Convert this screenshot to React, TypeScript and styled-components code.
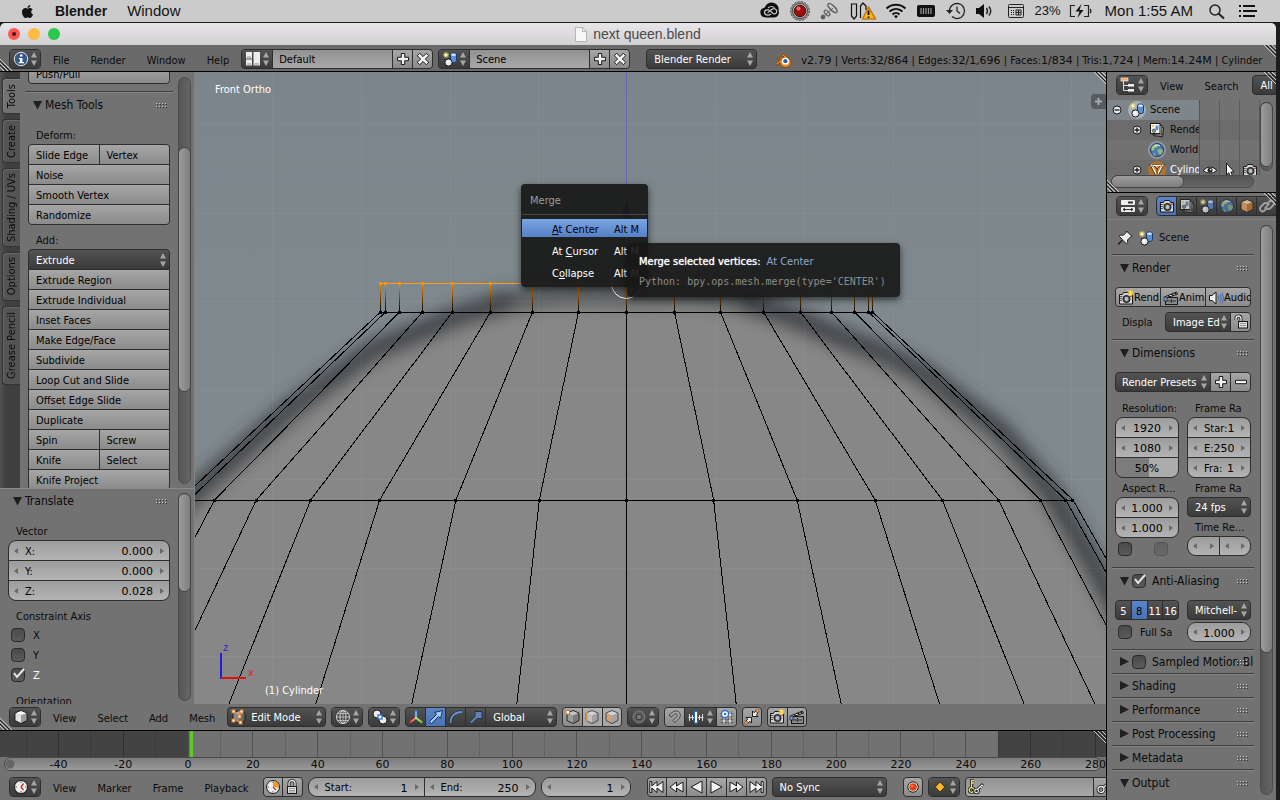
import React from "react";
import styled, { createGlobalStyle, css } from "styled-components";
import { FaApple } from "react-icons/fa";

const SANS = `"DejaVu Sans Condensed", "DejaVu Sans", sans-serif`;
const FIGURES = `"DejaVu Sans", sans-serif`;
const SYSTEM = `"Liberation Sans", sans-serif`;

const GlobalStyle = createGlobalStyle`
  * { box-sizing: border-box; }
  body {
    margin: 0;
    background: #1d1d1d;
    color: #0a0a0a;
    font: 11px/14px ${SANS};
    overflow: hidden;
  }
  button, input, select { font: inherit; color: inherit; margin: 0; }
  svg { display: block; flex: none; }
`;

const LINE = "#2e2e2e";
const WIDGET = "linear-gradient(#a6a6a6, #8b8b8b)";
const FIELD = "linear-gradient(#9c9c9c, #b4b4b4)";
const DARK = "linear-gradient(#535353, #3a3a3a)";
const BLUE = "linear-gradient(#5b84c6, #4872b5)";

/* ---------- icons ---------- */

const INK = "#1a1a1a";

const sceneArt = (
  <>
    <circle cx="4" cy="4" r="3" fill="#d8cf5a" opacity=".5" />
    <circle cx="4" cy="4" r="1.7" fill="#fff9b0" />
    <rect x="8.500" y="2" width="6" height="9.500" rx="2" fill="#5b8fd6" stroke="#1d3c6e" />
    <ellipse cx="11.500" cy="3.800" rx="2.500" ry="1.300" fill="#cfe2fb" />
    <circle cx="6.500" cy="11.500" r="3.600" fill="#e8e8e8" stroke={INK} />
    <circle cx="5.600" cy="10.600" r="1.300" fill="#fff" />
  </>
);

const cameraArt = (
  <>
    <path d="M1.500 4.500h3l1-2h5l1 2h3v9.500h-13z" fill="#d5d5d5" stroke={INK} />
    <path d="M2 6.500h2.500M2 8.500h2M2 10.500h2" stroke="#555" />
    <circle cx="8.500" cy="9" r="3.600" fill="#555" stroke={INK} />
    <circle cx="8.500" cy="9" r="1.900" fill="#b9c4d2" />
    <rect x="12" y="5.500" width="2" height="1.500" fill="#d84b2a" />
  </>
);

const sparkArt = <path d="M12.500 0v6M9.500 3h6M10.500 1l4 4M14.500 1l-4 4" stroke="#ffd94a" strokeWidth="1.200" />;

const clapperArt = (
  <>
    <rect x="2.500" y="7.500" width="12" height="7" fill="#8a8a8a" stroke={INK} />
    <path d="M4 11h9M8.500 9v4" stroke="#333" />
    <path d="M2 6.800L13.500 2l.9 2.200L3 8z" fill="#f2f2f2" stroke={INK} />
    <path d="M5 5.700l2 1.200M8.500 4.200l2 1.200M11.500 3l1.700 1" stroke={INK} strokeWidth="1.500" />
    <rect x="1" y="7" width="3" height="4" fill="#7aa4dd" stroke={INK} strokeWidth=".7" />
  </>
);

const worldArt = (
  <>
    <circle cx="8" cy="8" r="6.500" fill="#4b78ad" stroke="#20334d" />
    <path d="M4 3.500c2-1.500 4-1.500 5-.5L8 5.500 5.500 6 5 8.500 2.500 8.500C2 6.500 2.600 4.800 4 3.500z" fill="#a3c38f" />
    <path d="M8 8l3-1.500 3 1.500c0 2-1 4-3 5L9.500 11z" fill="#8fb37e" />
    <path d="M4 11l2 1 .5 2C5 13.500 4.300 12.500 4 11z" fill="#a3c38f" />
    <path d="M6 3.500q3-1.500 5 .5" stroke="#e7f1fa" fill="none" />
  </>
);

const layersArt = (
  <>
    <path d="M5.500 4.500l9 1.200-.8 9-9-1z" fill="#cfcfc4" stroke={INK} />
    <path d="M3.500 3l9.500.5-.3 9.500-9-.3z" fill="#e3e3da" stroke={INK} />
    <rect x="1.500" y="1.500" width="9.500" height="10" fill="#f4f4ee" stroke={INK} />
    <circle cx="4" cy="4" r="1" fill="#d6c83d" />
    <rect x="6.500" y="3.500" width="3" height="4.500" rx="1" fill="#5b8fd6" />
    <circle cx="5" cy="8.700" r="1.700" fill="#999" stroke={INK} strokeWidth=".6" />
  </>
);

const cubeFaces = (top: string, left: string, right: string) => (
  <>
    <path d="M8 1.500l6 2.500-6 2.500-6-2.500z" fill={top} />
    <path d="M2 4l6 2.500v8L2 11.500z" fill={left} />
    <path d="M14 4L8 6.500v8l6-3z" fill={right} />
    <path d="M8 1.500l6 2.500v7.500l-6 3-6-3V4z" fill="none" stroke={INK} strokeWidth=".9" />
  </>
);

const clockArt = (
  <>
    <circle cx="8" cy="8" r="6.500" fill="#eee" stroke={INK} />
    <path d="M8 2.500v1.500M8 12v1.500M2.500 8H4M12 8h1.500" stroke="#666" />
  </>
);

const art: Record<string, React.ReactNode> = {
  info: (
    <>
      <circle cx="8" cy="8" r="6.700" fill="#36578c" stroke="#dfe6ef" strokeWidth="1" />
      <rect x="7" y="3.500" width="2.400" height="2" fill="#fff" />
      <path d="M6 7h3.400v4H11v1.300H5.500V11H7V8.200H6z" fill="#fff" />
    </>
  ),
  layout: (
    <>
      <rect x="1" y="1" width="6" height="6.500" fill="#ececec" />
      <rect x="1" y="8.500" width="6" height="6" fill="#ececec" />
      <rect x="8.500" y="1" width="6.500" height="13.500" fill="#ececec" />
      <path d="M2 6h4M2 13h4M9.500 13h4.500" stroke="#8a8a8a" />
    </>
  ),
  scene: sceneArt,
  plus: <path d="M6.300 2.500h3.400v3.800h3.800v3.400H9.700v3.800H6.300V9.700H2.500V6.300h3.800z" fill="#f0f0f0" stroke={INK} />,
  minus: <path d="M2.500 6.300h11v3.400h-11z" fill="#f0f0f0" stroke={INK} />,
  cross: (
    <path d="M4.700 2.300L8 5.600l3.300-3.300 2.400 2.400L10.400 8l3.300 3.300-2.400 2.400L8 10.400l-3.300 3.300-2.400-2.400L5.600 8 2.300 4.700z" fill="#f0f0f0" stroke={INK} />
  ),
  blender: (
    <>
      <path d="M.500 12L6 7.500H2.300V5.800h6.200L6.300 4 7.700 2.500l6 5a5.300 4.700 0 1 1-9 3.500l-3 2.400z" fill="#f0851d" stroke="#5b3512" strokeWidth=".6" />
      <circle cx="9.800" cy="9.600" r="3.300" fill="#fff" />
      <circle cx="9.800" cy="9.600" r="2" fill="#2a5fa5" />
    </>
  ),
  cube: cubeFaces("#fff", "#e4e4e4", "#9c9c9c"),
  cubeOrange: cubeFaces("#ffd9a8", "#e8a765", "#c07a35"),
  editMode: (
    <>
      {cubeFaces("#aaa", "#8a8a8a", "#666")}
      {[[1, 1], [9, 1], [1, 10], [8, 12], [7, 6]].map(([x, y]) => (
        <rect key={`${x}-${y}`} x={x} y={y} width="3" height="3" fill="#fff" stroke="#e0781c" />
      ))}
    </>
  ),
  wire: (
    <g fill="none" stroke="#d6d6d6">
      <circle cx="8" cy="8" r="6.500" />
      <ellipse cx="8" cy="8" rx="3" ry="6.500" />
      <path d="M8 1.500v13M1.500 8h13M2.500 4.500h11M2.500 11.500h11" strokeWidth=".7" />
    </g>
  ),
  pivot: (
    <>
      <circle cx="5" cy="5" r="4" fill="#eee" stroke={INK} />
      <circle cx="11" cy="11" r="4" fill="#eee" stroke={INK} />
      <rect x="6" y="6" width="4" height="4" fill="#fff" stroke="#2d6fd0" strokeWidth="1.300" />
    </>
  ),
  axes: (
    <g strokeWidth="2.400" strokeLinecap="round">
      <path d="M8 9V2" stroke="#3f86e8" />
      <path d="M8 9l-5.500 4" stroke="#d83b2d" />
      <path d="M8 9l5.500 4" stroke="#6cbf32" />
      <path d="M8 9V3M8 9l-4 3M8 9l4 3" stroke="#fff" strokeWidth=".6" />
    </g>
  ),
  translate: <path d="M1.500 12.500L8.500 5.500 6.500 3.500 14.500 1.500 12.500 9.500 10.500 7.500 3.500 14.500z" fill="#9ecbf7" stroke="#16325c" />,
  rotate: (
    <>
      <path d="M2.500 14C2.500 7 7 3 14 3" fill="none" stroke="#22344d" strokeWidth="3.600" />
      <path d="M2.500 14C2.500 7 7 3 14 3" fill="none" stroke="#6d94c8" strokeWidth="1.800" />
    </>
  ),
  scale: <path d="M1.500 13l5.500-5.500V2.500h7v7H9L3.500 15z" fill="#5f84b4" stroke="#20334d" />,
  vertexMode: (
    <>
      {cubeFaces("#c4c4c4", "#9c9c9c", "#7a7a7a")}
      <rect x="1" y="1.500" width="3.500" height="3.500" fill="#fff" stroke="#e0781c" />
    </>
  ),
  edgeMode: (
    <g opacity=".75">
      {cubeFaces("#e0e0e0", "#cacaca", "#a0a0a0")}
      <path d="M2.500 3v9.500" stroke="#e38a35" strokeWidth="2" />
    </g>
  ),
  faceMode: <g opacity=".75">{cubeFaces("#e0e0e0", "#e89a5c", "#a0a0a0")}</g>,
  proportional: (
    <>
      <circle cx="8" cy="8" r="6" fill="#606060" stroke="#7c7c7c" />
      <circle cx="8" cy="8" r="2.800" fill="#7a7a7a" stroke="#333" />
    </>
  ),
  magnet: (
    <path d="M2 6l4.500-3.500c5-2.500 9 3 5.500 7L8 13.500l-2-2 4-4c1.200-1.700-.5-3.500-2.500-2.500L4 8z" fill="#a8a8a8" stroke="#444" />
  ),
  increment: (
    <>
      <path d="M.500 8.500h15M1.500 5v7M4.500 6v5M11.500 6v5M14.500 5v7" stroke="#e0e0e0" />
      <rect x="6.500" y="2.500" width="3" height="11.500" fill="#fff" stroke="#2d6fd0" />
    </>
  ),
  snapGrid: (
    <>
      <path d="M5 2v13M11 2v13M1 6h14M1 12h14" stroke={INK} strokeWidth="2.600" />
      <path d="M5 2v13M11 2v13M1 6h14M1 12h14" stroke="#fff" strokeWidth="1.200" />
      <circle cx="6" cy="5" r="3.500" fill="#fff" stroke="#2d6fd0" strokeWidth="1.300" />
      <circle cx="6" cy="5" r="1.300" fill="#2d6fd0" />
    </>
  ),
  snapPeel: (
    <>
      <path d="M8.500 2v5.500H14L12.300 5.800 14 4 12 2l-1.800 1.700zM7.500 14V8.500H2l1.700 1.700L2 12l2 2 1.800-1.700z" fill="#f0f0f0" stroke={INK} />
      <circle cx="13.500" cy="2" r="1.600" fill="#f3a35a" stroke="#8b4a12" strokeWidth=".7" />
      <circle cx="2.300" cy="13.700" r="1.600" fill="#f3a35a" stroke="#8b4a12" strokeWidth=".7" />
    </>
  ),
  camera: cameraArt,
  cameraNew: <>{cameraArt}{sparkArt}</>,
  clapper: clapperArt,
  clock: <>{clockArt}<path d="M8 8l2.500-3.500M8 8l2.500 3" stroke="#d02c1c" strokeWidth="1.300" /></>,
  clockAuto: <>{clockArt}<path d="M8 8V2a6 6 0 0 1 6 6z" fill="#f59a1d" /><path d="M8 8l3 3" stroke="#d02c1c" strokeWidth="1.300" /></>,
  lock: (
    <>
      <path d="M5 8V4.500a3 3 0 0 1 6 0V8" fill="none" stroke={INK} strokeWidth="3" />
      <path d="M5 8V4.500a3 3 0 0 1 6 0V8" fill="none" stroke="#eee" strokeWidth="1.300" />
      <rect x="3.500" y="7.500" width="9" height="7" fill="#ddd" stroke={INK} />
      <path d="M5 9.500h6M5 11.500h6M5 13h6" stroke="#888" strokeWidth=".8" />
    </>
  ),
  unlock: (
    <>
      <path d="M8 8V4.500a2.500 2.500 0 0 0-5 0V6" fill="none" stroke={INK} strokeWidth="3" />
      <path d="M8 8V4.500a2.500 2.500 0 0 0-5 0V6" fill="none" stroke="#eee" strokeWidth="1.300" />
      <rect x="5.500" y="7.500" width="9" height="6.500" fill="#ddd" stroke={INK} />
      <path d="M7 9.500h6M7 11.500h6" stroke="#888" strokeWidth=".8" />
    </>
  ),
  first: <path d="M.800 2.500h2V7L8 2.500V7l6-4.500v11L8 9v4.500L2.800 9v4.500h-2z" fill="#f3f3f3" stroke={INK} />,
  prev: <path d="M1 8l6.500-5v4L14 3v10L7.500 9v4z" fill="#f3f3f3" stroke={INK} />,
  playBack: <path d="M13 2v12L2 8z" fill="#f3f3f3" stroke={INK} />,
  play: <path d="M3 2v12l11-6z" fill="#f3f3f3" stroke={INK} />,
  next: <path d="M15 8L8.500 3v4L2 3v10l6.500-4v4z" fill="#f3f3f3" stroke={INK} />,
  last: <path d="M15.200 2.500h-2V7L8 2.500V7L2 2.500v11L8 9v4.500L13.200 9v4.500h2z" fill="#f3f3f3" stroke={INK} />,
  record: (
    <>
      <circle cx="8" cy="8" r="5.200" fill="#f0f0f0" stroke={INK} />
      <circle cx="8" cy="8" r="3.800" fill="#e03c10" />
      <circle cx="7" cy="7" r="1.500" fill="#ff7c4a" />
    </>
  ),
  diamond: <path d="M8 3l4.800 5L8 13 3.200 8z" fill="#fbb829" stroke="#4a3506" />,
  keySet: (
    <g fill="none">
      <path d="M3.500 8V1.500H6M3.500 4H6" stroke={INK} strokeWidth="3" />
      <circle cx="3.500" cy="11" r="2.300" stroke={INK} strokeWidth="3" />
      <path d="M3.500 8.500V1.500H6M3.500 4H6" stroke="#f1e36a" strokeWidth="1.300" />
      <circle cx="3.500" cy="11" r="2.300" stroke="#f1e36a" strokeWidth="1.300" />
      <path d="M9 11l5-5 1.500 1.500M12.500 7.500L14 9" stroke={INK} strokeWidth="3" />
      <circle cx="8.500" cy="12" r="1.800" stroke={INK} strokeWidth="3" />
      <path d="M9.500 10.500l4.500-4.500 1.500 1.500M12.500 7.500L14 9" stroke="#eee" strokeWidth="1.200" />
      <circle cx="8.500" cy="12" r="1.800" stroke="#eee" strokeWidth="1.200" />
    </g>
  ),
  key: (
    <g fill="none">
      <path d="M7 9l7-6" stroke={INK} strokeWidth="3" />
      <circle cx="5" cy="10.500" r="3" stroke={INK} strokeWidth="3" />
      <path d="M7 9l7-6" stroke="#eee" strokeWidth="1.300" />
      <circle cx="5" cy="10.500" r="3" stroke="#eee" strokeWidth="1.300" />
    </g>
  ),
  outliner: (
    <>
      <path d="M3.500 4v9.500H8M3.500 8.500H8" stroke="#ddd" fill="none" />
      <rect x="1" y="1" width="7" height="3" fill="#f2a65a" stroke="#fff" strokeWidth=".6" />
      <rect x="8" y="7" width="6" height="2.600" fill="#eee" />
      <rect x="8" y="12" width="6" height="2.600" fill="#eee" />
    </>
  ),
  properties: (
    <>
      <rect x="1" y="2" width="14" height="5" rx="1" fill="#eee" />
      <rect x="8" y="3.500" width="5" height="2" fill="#333" />
      <rect x="1" y="9" width="14" height="5" rx="1" fill="#eee" />
      <path d="M3 11.500h10M5 10l-2 1.500L5 13M11 10l2 1.500-2 1.500" stroke="#333" fill="none" />
    </>
  ),
  layers: layersArt,
  world: worldArt,
  mesh: (
    <>
      <path d="M2.500 3.500h11L8 13.500z" fill="#d98a3a" stroke={INK} strokeWidth="2.600" />
      <path d="M2.500 3.500h11L8 13.500z" fill="#d98a3a" stroke="#fff" strokeWidth="1.300" />
      <path d="M8 7l-3-3M8 7l3-3M8 7v5" stroke="#5b3512" />
      {[[2.5, 3.5], [13.5, 3.5], [8, 13.5]].map(([x, y]) => (
        <circle key={x} cx={x} cy={y} r="1.400" fill="#f6c795" stroke="#6b3d10" strokeWidth=".6" />
      ))}
    </>
  ),
  eye: (
    <>
      <path d="M1 8.500Q8 1.500 15 8.500 8 14 1 8.500z" fill="#eee" stroke={INK} />
      <circle cx="8" cy="8.300" r="2.500" fill="#222" />
      <circle cx="8.600" cy="7.600" r=".8" fill="#fff" />
    </>
  ),
  cursor: <path d="M4.500 1l7.500 9H8.800l2 4.300-2 1-2-4.500-2.300 2z" fill="#fff" stroke={INK} />,
  link: (
    <g fill="none" strokeLinecap="round">
      <path d="M6.500 11.500l-1 1a2.600 2.600 0 0 1-3.700-3.700l3-3a2.600 2.600 0 0 1 3.700 0M9.500 4.500l1-1a2.600 2.600 0 0 1 3.700 3.700l-3 3a2.600 2.600 0 0 1-3.700 0" stroke="#bbb" strokeWidth="2" />
      <path d="M6 10l4-4" stroke="#ccc" strokeWidth="1.500" />
    </g>
  ),
  pin: (
    <path d="M9.500 1l5.500 5.500-1.500.5-3 3 .3 2.800-1.300 1L6 10.300 1.500 14.500 1 14l4.500-4.500L2.300 6.300l1-1.300 3 .3 3-3z" fill="#eee" stroke={INK} />
  ),
  speaker: (
    <>
      <path d="M1.500 5.500H4L8 2v12l-4-3.500H1.500z" fill="#f0f0f0" stroke={INK} />
      <path d="M10 5.500q1.500 2.500 0 5M12 4q2.500 4 0 8M14 2.500q3 5.500 0 11" fill="none" stroke="#3f6fb8" />
    </>
  ),
};

const Icon = ({ name, size = 16 }: { name: string; size?: number }) => (
  <svg width={size} height={size} viewBox="0 0 16 16" fill="none" aria-hidden="true">
    {art[name]}
  </svg>
);

const Arrows = () => (
  <svg width="6" height="14" viewBox="0 0 6 14" aria-hidden="true">
    <path d="M3 0l3 5.500H0zM3 14l3-5.500H0z" fill="#a5a5a5" />
  </svg>
);

const Nudge = ({ right }: { right?: boolean }) => (
  <svg width="4" height="6" viewBox="0 0 4 6" aria-hidden="true">
    <path d={right ? "M0 0l4 3-4 3z" : "M4 0L0 3l4 3z"} fill="#6a6a6a" />
  </svg>
);

const Triangle = ({ open }: { open?: boolean }) => (
  <svg width="9" height="9" viewBox="0 0 9 9" aria-hidden="true">
    <path d={open ? "M0 0h9L4.500 8.500z" : "M0 0l9 4.500L0 9z"} fill="#1f1f1f" />
  </svg>
);

const Grip = () => (
  <svg width="12" height="6" viewBox="0 0 12 6" shapeRendering="crispEdges" aria-hidden="true">
    {[0, 3, 6, 9].map((x) => (
      <g key={x}>
        <path d={`M${x} 1h1M${x} 4h1`} stroke="#c8c8c8" />
        <path d={`M${x + 1} 2h1M${x + 1} 5h1`} stroke="#333" />
      </g>
    ))}
  </svg>
);

/* ---------- shell ---------- */

const Screen = styled.div`
  display: flex;
  flex-direction: column;
  height: 100vh;
  background: #000;
`;

const MacBar = styled.header`
  display: flex;
  align-items: center;
  height: 22px;
  padding: 0 22px 0 20px;
  background: #cbcbcb;
  color: #141414;
  font: 14px/20px ${SYSTEM};
`;

const MacMenu = styled.button<{ $bold?: boolean }>`
  border: 0;
  padding: 0;
  margin-left: 20px;
  background: none;
  font-size: ${(p) => (p.$bold ? 14 : 15)}px;
  font-weight: ${(p) => (p.$bold ? 700 : 400)};
`;

const MacTray = styled.div`
  display: flex;
  align-items: center;
  gap: 8px;
  margin-left: auto;
`;

const Charge = styled.span`
  font-size: 13px;
`;

const Clock = styled.time`
  padding: 0 5px 0 4px;
  font-size: 15px;
`;

const TitleBar = styled.div`
  display: flex;
  align-items: center;
  height: 22px;
  margin: 1px 4px 0 0;
  padding: 0 8px;
  background: linear-gradient(#e9e6e9, #d2d0d2);
  border-radius: 5px 5px 0 0;
  color: #4a4a4a;
  font: 14px/20px ${SYSTEM};
`;

const Lights = styled.div`
  display: flex;
  flex: 1;
  gap: 8px;
`;

const Light = styled.button<{ $color: string }>`
  display: grid;
  place-items: center;
  width: 12px;
  height: 12px;
  padding: 0;
  border: 0;
  border-radius: 50%;
  background: ${(p) => p.$color};
`;

const Title = styled.h1`
  display: flex;
  align-items: center;
  gap: 6px;
  margin: 0;
  font: inherit;
`;

const Spacer = styled.div`
  flex: 1;
`;

const Workspace = styled.div`
  display: flex;
  flex-direction: column;
  flex: 1;
  min-height: 0;
  margin-right: 4px;
  background: #000;
`;

const Desk = styled.div`
  display: flex;
  flex: 1;
  min-height: 0;
  background: #1d1d1d;
`;

const Column = styled.div`
  display: flex;
  flex-direction: column;
  flex: 1;
  min-width: 0;
  min-height: 0;
`;

const Bar = styled.div<{ $tone?: string; $line?: boolean; $top?: number }>`
  position: relative;
  display: flex;
  align-items: center;
  flex: none;
  height: ${(p) => (p.$line ? 27 : 26)}px;
  padding: ${(p) => p.$top ?? 0}px 0 0 9px;
  overflow: hidden;
  background: ${(p) => p.$tone ?? "#727272"};
  border-bottom: ${(p) => (p.$line ? "1px solid #000" : "0")};
  white-space: nowrap;
`;

const MenuRow = styled.nav`
  display: flex;
  gap: 1px;
  margin: 0 2px;
`;

const MenuItem = styled.button`
  border: 0;
  padding: 3px 10px 0;
  background: none;
  line-height: 18px;
`;

const Corner = styled.svg<{ $at: "tr" | "bl" }>`
  position: absolute;
  ${(p) => (p.$at === "tr" ? "top: 0; right: 0;" : "bottom: 0; left: 0;")}
  pointer-events: none;
`;

const CornerGrip = ({ at }: { at: "tr" | "bl" }) => (
  <Corner $at={at} width="12" height="12" viewBox="0 0 12 12" aria-hidden="true">
    <path d={at === "tr" ? "M0 0l12 12M4 0l8 8M8 0l4 4" : "M0 0l12 12M0 4l8 8M0 8l4 4"} stroke="#c9c9c9" />
    <path d={at === "tr" ? "M2 0l10 10M6 0l6 6" : "M0 2l10 10M0 6l6 6"} stroke="#222" />
  </Corner>
);

/* ---------- widgets ---------- */

const Group = styled.div<{ $w?: number; $gap?: number; $cols?: string; $rows?: number; $round?: number; $grow?: boolean; $bleed?: number }>`
  display: grid;
  grid-template-columns: ${(p) => p.$cols ?? "minmax(0, 1fr)"};
  grid-auto-rows: ${(p) => p.$rows ?? 18}px;
  gap: 1px;
  flex: none;
  ${(p) => p.$grow && css`flex: 1;`}
  width: ${(p) => (p.$w ? `${p.$w}px` : "auto")};
  margin-left: ${(p) => p.$gap ?? 0}px;
  margin-right: ${(p) => -(p.$bleed ?? 0)}px;
  overflow: hidden;
  border: 1px solid ${LINE};
  border-radius: ${(p) => p.$round ?? 4}px;
  background: ${LINE};
`;

const Split = styled.div`
  display: grid;
  grid-template-columns: 1fr 1fr;
  gap: 1px;
`;

type Tone = "light" | "dark" | "blue" | "dim" | "muted";
const tones: Record<Tone, string> = {
  light: WIDGET,
  dark: DARK,
  muted: DARK,
  blue: BLUE,
  dim: "linear-gradient(#b2b2b2, #a6a6a6)",
};

const Push = styled.button<{ $tone?: Tone; $text?: boolean; $tight?: boolean; $figure?: boolean }>`
  display: flex;
  align-items: center;
  justify-content: ${(p) => (p.$text || p.$tight ? "flex-start" : "center")};
  min-width: 0;
  border: 0;
  padding: ${(p) => (p.$text ? "2px 7px 0" : p.$tight ? "1px 0 0 2px" : p.$figure ? "3px 0 0" : "0")};
  overflow: hidden;
  background: ${(p) => tones[p.$tone ?? "light"]};
  color: ${(p) => (p.$tone === "dark" ? "#fff" : "#000")};
  white-space: nowrap;
  & > svg { opacity: ${(p) => (p.$tone === "muted" ? 0.75 : 1)}; }
`;

const TypeButton = styled.button`
  display: flex;
  align-items: center;
  justify-content: space-between;
  border: 0;
  padding: 0 3px;
  background: ${DARK};
`;

const Picker = styled.span`
  position: relative;
  display: flex;
  align-items: center;
  min-width: 0;
  background: ${DARK};
  color: #fff;
  & > svg { position: absolute; right: 3px; pointer-events: none; }
  & > svg:first-child { left: 3px; right: auto; }
`;

const PickerSelect = styled.select<{ $pad?: number }>`
  appearance: none;
  width: 100%;
  height: 100%;
  border: 0;
  padding: 2px 8px 0 ${(p) => p.$pad ?? 7}px;
  background: none;
  outline: 0;
  option { color: #000; }
`;

const Select = ({ label, value, pad, icon }: { label: string; value: string; pad?: number; icon?: string }) => (
  <Picker>
    {icon && <Icon name={icon} />}
    <PickerSelect aria-label={label} $pad={pad}>
      <option>{value}</option>
    </PickerSelect>
    <Arrows />
  </Picker>
);

const EditorType = ({ icon, label, gap }: { icon: string; label: string; gap?: number }) => (
  <Group $w={32} $gap={gap}>
    <TypeButton aria-label={label} aria-haspopup="menu">
      <Icon name={icon} />
      <Arrows />
    </TypeButton>
  </Group>
);

const NumberBox = styled.label<{ $fill?: boolean }>`
  display: flex;
  align-items: center;
  min-width: 0;
  padding: 0 5px;
  background: ${(p) => (p.$fill ? "linear-gradient(90deg, #7c7c7c 54%, #acacac 54%)" : FIELD)};
  color: #000;
  white-space: nowrap;
`;

const NumberName = styled.span`
  margin-left: 7px;
  padding-top: 2px;
`;

const NumberInput = styled.input<{ $align: "right" | "center" }>`
  flex: 1;
  width: 0;
  min-width: 0;
  height: 18px;
  border: 0;
  padding: 2px ${(p) => (p.$align === "right" ? 7 : 0)}px 0 0;
  background: none;
  outline: 0;
  font-family: ${FIGURES};
  text-align: ${(p) => p.$align};
`;

const Num = ({ name, value, align = "right", label, fill }: { name?: string; value: string; align?: "right" | "center"; label: string; fill?: boolean }) => (
  <NumberBox $fill={fill}>
    {!fill && <Nudge />}
    {name && <NumberName>{name}</NumberName>}
    <NumberInput aria-label={label} defaultValue={value} $align={align} />
    {!fill && <Nudge right />}
  </NumberBox>
);

const TextField = styled.input`
  min-width: 0;
  border: 0;
  padding: 2px 6px 0;
  background: linear-gradient(#929292, #a8a8a8);
  color: #000;
  outline: 0;
`;

const IconField = styled.label`
  display: flex;
  align-items: center;
  min-width: 0;
  padding-left: 2px;
  background: linear-gradient(#929292, #a8a8a8);
  input { flex: 1; background: none; }
`;

const Tick = styled.span<{ $faded?: boolean }>`
  position: relative;
  display: flex;
  flex: none;
  width: 14px;
  height: 14px;
  opacity: ${(p) => (p.$faded ? 0.4 : 1)};
  svg { position: absolute; left: 2px; top: 0; pointer-events: none; }
`;

const TickInput = styled.input`
  appearance: none;
  width: 14px;
  height: 14px;
  border: 1px solid #2b2b2b;
  border-radius: 4px;
  background: linear-gradient(#4a4a4a, #5a5a5a);
  &:not(:checked) + svg { display: none; }
`;

const CheckBox = ({ label, checked, faded }: { label?: string; checked?: boolean; faded?: boolean }) => (
  <Tick $faded={faded}>
    <TickInput type="checkbox" defaultChecked={checked} aria-label={label} />
    <svg width="13" height="11" viewBox="0 0 13 11" aria-hidden="true">
      <path d="M1 5l3 4 7-8" fill="none" stroke="#e6e6e6" strokeWidth="2" />
    </svg>
  </Tick>
);

const CheckRow = styled.label<{ $on?: boolean }>`
  display: flex;
  align-items: center;
  gap: 8px;
  height: 20px;
  padding-left: 3px;
  color: ${(p) => (p.$on ? "#fff" : "inherit")};
  line-height: 16px;
  white-space: nowrap;
`;

const CheckText = styled.span`
  padding-top: 2px;
`;

const Track = styled.div<{ $m?: string; $flat?: boolean }>`
  display: flex;
  flex-direction: ${(p) => (p.$flat ? "row" : "column")};
  ${(p) => (p.$flat ? "height: 13px;" : "width: 13px;")}
  flex: none;
  margin: ${(p) => p.$m ?? "5px 3px"};
  border: 1px solid #4c4c4c;
  border-radius: 7px;
  background: ${(p) => (p.$flat ? "linear-gradient(#555, #656565)" : "linear-gradient(90deg, #555, #656565)")};
`;

const Thumb = styled.div<{ $before?: number; $size: number; $flat?: boolean }>`
  flex: 0 0 ${(p) => p.$size}%;
  ${(p) => (p.$flat ? "" : `margin-top: ${p.$before ?? 0}px;`)}
  border-radius: 6px;
  background: ${(p) => (p.$flat ? "linear-gradient(#9c9c9c, #7e7e7e)" : "linear-gradient(90deg, #9c9c9c, #7e7e7e)")};
  box-shadow: 0 0 0 1px #444;
`;

const HeadBar = styled.div<{ $open?: boolean; $pad?: number }>`
  display: flex;
  align-items: center;
  flex: none;
  height: ${(p) => (p.$open ? 27 : 24)}px;
  border-top: 1px solid #3f3f3f;
  box-shadow: inset 0 1px 0 #858585;
  padding: 0 ${(p) => p.$pad ?? 5}px 0 8px;
  white-space: nowrap;
  & > svg:last-child { margin-left: auto; }
`;

const HeadText = styled.h2<{ $gap?: number }>`
  flex: 0 1 auto;
  min-width: 0;
  margin: 1px 0 0 ${(p) => p.$gap ?? 3}px;
  font: 12px/15px ${SANS};
`;

const Label = styled.div<{ $pad?: number }>`
  height: 19px;
  padding-left: ${(p) => p.$pad ?? 8}px;
  overflow: hidden;
  line-height: 21px;
  white-space: nowrap;
`;

/* ---------- 3D view left regions ---------- */

const ViewRow = styled.div`
  display: flex;
  flex: 1;
  min-height: 0;
`;

const Shelf = styled.aside`
  display: flex;
  flex-direction: column;
  flex: 0 0 195px;
  background: #727272;
  border-right: 1px solid #858585;
`;

const ShelfTop = styled.div`
  display: flex;
  flex: 1;
  min-height: 0;
  overflow: hidden;
`;

const Tabs = styled.div`
  display: flex;
  flex-direction: column;
  gap: 5px;
  flex: 0 0 20px;
  padding: 6px 0 0 2px;
  background: linear-gradient(90deg, #525252, #3f3f3f 30%);
`;

const Tab = styled.button<{ $h: number; $on?: boolean }>`
  height: ${(p) => p.$h}px;
  border: 1px solid #333;
  border-right: 0;
  border-radius: 4px 0 0 4px;
  padding: 0;
  background: ${(p) => (p.$on ? "#727272" : "#545454")};
  box-shadow: inset 1px 1px 0 rgba(255, 255, 255, 0.12);
  span {
    display: block;
    writing-mode: vertical-rl;
    transform: rotate(180deg);
    margin: 0 auto;
    line-height: 15px;
  }
`;

const ToolPanel = styled.div`
  display: flex;
  flex-direction: column;
  flex: 1;
  min-width: 0;
  padding: 0 5px;
`;

const Stack = styled.div<{ $m?: string }>`
  display: flex;
  flex-direction: column;
  flex: none;
  margin: ${(p) => p.$m ?? "0 3px"};
`;

const ShelfBottom = styled.div`
  display: flex;
  flex: 0 0 216px;
  overflow: hidden;
  border-top: 1px solid #8a8a8a;
`;

const OpPanel = styled.div`
  flex: 1;
  min-width: 0;
  padding: 0 8px;
`;

const OpHead = styled(HeadBar)`
  border: 0;
  box-shadow: none;
  height: 24px;
  padding: 0 2px 0 5px;
`;

const Gap = styled.div<{ $h: number }>`
  flex: none;
  height: ${(p) => p.$h}px;
`;

/* ---------- viewport ---------- */

const Viewport = styled.main`
  position: relative;
  flex: 1;
  min-width: 0;
  overflow: hidden;
  background: #7e878c;
  & > svg:first-child { width: 100%; height: 100%; }
`;

const Popup = styled.div`
  position: absolute;
  left: 326px;
  top: 112px;
  width: 127px;
  height: 103px;
  padding: 7px 1px 0;
  border-radius: 4px;
  background: rgba(24, 24, 24, 0.93);
  box-shadow: 0 3px 7px rgba(0, 0, 0, 0.6);
  color: #fff;
`;

const PopupTitle = styled.div`
  height: 24px;
  margin-bottom: 4px;
  padding-left: 8px;
  border-bottom: 1px solid #484848;
  color: #9c9c9c;
  line-height: 20px;
`;

const PopupItem = styled.button<{ $on?: boolean }>`
  display: flex;
  justify-content: space-between;
  align-items: center;
  width: 100%;
  height: 18px;
  margin-bottom: 4px;
  border: 0;
  padding: 3px 8px 0 30px;
  background: ${(p) => (p.$on ? "linear-gradient(#7ba4e2, #5580c4)" : "none")};
  color: ${(p) => (p.$on ? "#000" : "#fff")};
`;

const Tip = styled.div`
  position: absolute;
  left: 432px;
  top: 171px;
  width: 273px;
  height: 54px;
  padding: 9px 12px 0;
  border-radius: 4px;
  background: rgba(24, 24, 24, 0.92);
  box-shadow: 0 3px 7px rgba(0, 0, 0, 0.6);
  color: #fff;
  line-height: 20px;
  white-space: nowrap;
`;

const TipTitle = styled.span`
  margin-right: 6px;
  text-shadow: 0 0 1px #fff;
`;

const TipValue = styled.span`
  color: #93a7ca;
`;

const TipCode = styled.code`
  display: block;
  color: #8c8c8c;
  font: 10px/20px "DejaVu Sans Mono", monospace;
`;

const ViewLabel = styled.span<{ $bottom?: boolean }>`
  position: absolute;
  left: ${(p) => (p.$bottom ? 70 : 20)}px;
  ${(p) => (p.$bottom ? "bottom: 6px;" : "top: 11px;")}
  color: #fff;
`;

const Expand = styled.button`
  position: absolute;
  top: 22px;
  right: 0;
  width: 15px;
  height: 15px;
  display: grid;
  place-items: center;
  border: 0;
  border-radius: 4px 0 0 4px;
  padding: 0;
  background: #555b5f;
`;

const CX = 626.5;
const ring = [-246, -241, -227, -204, -174, -136, -94, -48, 0, 48, 94, 137, 174, 205, 228, 242, 246];
const levels = [
  { y: 312, k: 1 },
  { y: 500, k: 1.815 },
  { y: 704, k: 2.285 },
];

const Scene3D = () => (
  <svg viewBox="195 72 911 632" preserveAspectRatio="xMidYMid slice" aria-label="Mesh in front view">
    <defs>
      <filter id="soft" x="-20%" y="-20%" width="140%" height="140%">
        <feGaussianBlur stdDeviation="8" />
      </filter>
      <linearGradient id="sky" x1="0" y1="0" x2="0" y2="1">
        <stop offset="0" stopColor="#7c858b" />
        <stop offset=".5" stopColor="#808a8e" />
      </linearGradient>
      <linearGradient id="edge" x1="0" y1="283" x2="0" y2="312" gradientUnits="userSpaceOnUse">
        <stop offset="0" stopColor="#ff8c00" />
        <stop offset="1" stopColor="#000" />
      </linearGradient>
    </defs>
    <rect x="195" y="72" width="911" height="632" fill="url(#sky)" />
    <g filter="url(#soft)">
      <path d="M150 540L206 488L290 414L371 356L421 335L462 318L512 302L626 300L746 302L796 320L878 354L930 380L1000 438L1055 500L1106 595L1150 660V760H150z" fill="#878787" />
      <path d="M150 535L206 484L290 410L371 352L421 332L460 316L512 301" fill="none" stroke="#33373a" strokeWidth="22" opacity=".82" />
      <path d="M490 303L560 296L690 296L765 304" fill="none" stroke="#3a3e40" strokeWidth="19" opacity=".7" />
      <path d="M740 300L796 319L835 336L878 352L925 375L1000 432L1052 495L1090 560L1130 635" fill="none" stroke="#33373a" strokeWidth="23" opacity=".82" />
    </g>
    <g stroke="#fff" opacity=".04" shapeRendering="crispEdges">
      {[-4, -3, -2, -1, 1, 2, 3, 4, 5].map((i) => (
        <path key={i} d={`M${Math.round(627 + i * 88.7)} 72V704`} />
      ))}
      {[0, 1, 2, 3, 4, 5, 6].map((i) => (
        <path key={i} d={`M195 ${Math.round(124 + i * 88.7)}H1106`} />
      ))}
    </g>
    <path d="M626.500 72V200" stroke="#6468b4" />
    <path d="M626.500 200l4.500 17h-9z" fill="#2a2aa8" />
    <g shapeRendering="crispEdges" stroke="#000" fill="none">
      {ring.map((o, i) => (
        <polyline key={i} points={levels.map((l) => `${CX + o * l.k},${l.y}`).join(" ")} />
      ))}
      <path d="M380 312.500H873M195 500.500H1073" />
    </g>
    <g shapeRendering="crispEdges">
      {ring.map((o, i) => (
        <g key={i}>
          <rect x={Math.round(CX + o - 0.5)} y="284" width="1" height="28" fill="url(#edge)" />
          <rect x={Math.round(CX + o - 1.5)} y="282" width="3" height="3" fill="#ff8c00" />
          <rect x={Math.round(CX + o - 1.5)} y="311" width="3" height="3" fill="#000" />
          <rect x={Math.round(CX + o * 1.815 - 1.5)} y="499" width="3" height="3" fill="#000" />
        </g>
      ))}
      <path d="M380 283.500H873" stroke="#ff9a1a" />
    </g>
    <circle cx="626.500" cy="283.500" r="15" fill="none" stroke="#fff" />
    <g shapeRendering="crispEdges" strokeWidth="2">
      <path d="M221 653v26" stroke="#1f1fd6" />
      <path d="M221 678h25" stroke="#e01010" />
    </g>
    <text x="223" y="651" fill="#2b2bd0" fontSize="11">z</text>
    <text x="248" y="676" fill="#d02b2b" fontSize="11">x</text>
  </svg>
);

/* ---------- timeline ---------- */

const TimeBody = styled.div`
  position: relative;
  flex: none;
  height: 26px;
  & > svg:first-child { width: 100%; height: 100%; }
`;

const Ruler = styled.div`
  display: flex;
  flex: none;
  height: 17px;
  padding: 0 5px 3px 4px;
  background: #727272;
  overflow: hidden;
`;

const RulerBar = styled.div`
  flex: 1;
  min-width: 0;
  border: 1px solid #484848;
  border-radius: 7px;
  background: radial-gradient(circle at 5px 6px, #666 4px, transparent 5px), linear-gradient(#7c7c7c, #999);
`;

const Ticks = styled.div`
  display: grid;
  grid-template-columns: repeat(17, minmax(0, 1fr));
  margin: 0 -28px 0 21px;
  font-family: ${FIGURES};
  text-align: center;
  line-height: 13px;
`;

const FrameLines = () => {
  const at = (f: number) => 188 + f * 3.24;
  const lines = Array.from({ length: 34 }, (_, i) => -50 + i * 10);
  return (
    <svg viewBox="0 0 1106 26" preserveAspectRatio="none" shapeRendering="crispEdges" aria-hidden="true">
      <rect width="1106" height="26" fill="#434343" />
      <rect x={at(0)} width={250 * 3.24} height="26" fill="#727272" />
      {lines.map((f) => (
        <path key={f} d={`M${Math.floor(at(f)) + 0.5} 0V26`} stroke="#000" opacity={f % 20 === 0 ? 0.28 : 0.12} />
      ))}
      <rect x="190" width="3" height="26" fill="#5ec92f" />
    </svg>
  );
};

/* ---------- right side ---------- */

const SideColumn = styled.div`
  display: flex;
  flex-direction: column;
  flex: 0 0 169px;
  min-width: 0;
  min-height: 0;
  margin-left: 1px;
  overflow: hidden;
  background: #727272;
`;

const Tree = styled.div`
  position: relative;
  display: flex;
  flex-direction: column;
  flex: none;
  height: 95px;
  border-bottom: 1px solid #000;
  background: #727272;
`;

const TreeMain = styled.div`
  display: flex;
  height: 77px;
  overflow: hidden;
`;

const TreeList = styled.ul`
  flex: 1;
  margin: 2px 0 0;
  padding: 0;
  list-style: none;
`;

const TreeRow = styled.li<{ $alt?: boolean }>`
  display: flex;
  height: 20px;
  background: ${(p) => (p.$alt ? "#6c6c6c" : "#727272")};
`;

const TreeName = styled.div<{ $depth: number; $on?: boolean; $lit?: boolean }>`
  display: flex;
  align-items: center;
  flex: 0 0 93px;
  min-width: 0;
  border-right: 1px solid #555;
  padding-left: ${(p) => 5 + p.$depth * 20}px;
  overflow: hidden;
  background: ${(p) => (p.$on ? "#7c868b" : "none")};
  color: ${(p) => (p.$lit ? "#fff" : "inherit")};
  line-height: 16px;
  white-space: nowrap;
`;

const Expander = styled.span<{ $hidden?: boolean }>`
  flex: none;
  width: 12px;
  visibility: ${(p) => (p.$hidden ? "hidden" : "visible")};
`;

const Halo = styled.span<{ $color?: string }>`
  flex: none;
  margin: 0 4px 0 4px;
  padding: 1px;
  border-radius: 50%;
  background: ${(p) => p.$color ?? "none"};
`;

const TreeCell = styled.div`
  display: grid;
  place-items: center;
  flex: 0 0 20px;
  border-right: 1px solid #5c5c5c;
`;

const PlusMinus = ({ minus }: { minus?: boolean }) => (
  <svg width="10" height="10" viewBox="0 0 10 10" aria-hidden="true">
    <circle cx="5" cy="5" r="4" fill="#e8e8e8" stroke={INK} />
    <path d={minus ? "M2.500 5h5" : "M2.500 5h5M5 2.500v5"} stroke={INK} strokeWidth="1.300" />
  </svg>
);

const PropsBody = styled.div`
  display: flex;
  flex: 1;
  min-height: 0;
  overflow: hidden;
  border-top: 1px solid #808080;
`;

const PropsMain = styled.div`
  flex: 0 0 142px;
  width: 142px;
  min-width: 0;
  margin-left: 5px;
`;

const Crumb = styled.div`
  display: flex;
  align-items: center;
  gap: 5px;
  height: 34px;
  padding: 2px 0 0 5px;
`;

const Body = styled.div`
  display: flex;
  flex-direction: column;
  padding: 6px 3px 7px;
`;

const Line = styled.div<{ $gap?: number }>`
  display: flex;
  margin-bottom: ${(p) => p.$gap ?? 0}px;
`;

const Halves = styled.div`
  display: grid;
  grid-template-columns: 64px 64px;
  column-gap: 8px;
  align-items: start;
`;

const NameCell = styled.div<{ $w: number }>`
  width: ${(p) => p.$w}px;
  height: 20px;
  padding-left: 7px;
  line-height: 22px;
`;

const Checks = styled.div`
  display: flex;
  align-items: center;
  gap: 22px;
  height: 22px;
  padding-left: 3px;
`;

const PanelCheck = styled.span`
  margin-left: 3px;
`;

const Panel = ({ title, open, children, check }: { title: string; open?: boolean; children?: React.ReactNode; check?: React.ReactNode }) => (
  <section>
    <HeadBar $open={open}>
      <Triangle open={open} />
      {check && <PanelCheck>{check}</PanelCheck>}
      <HeadText $gap={check ? 6 : 3}>{title}</HeadText>
      <Grip />
    </HeadBar>
    {children && <Body>{children}</Body>}
  </section>
);

/* ---------- macOS tray ---------- */

const Tray = () => (
  <MacTray>
    <svg width="22" height="18" viewBox="0 0 22 18" fill="none" aria-hidden="true">
      <path d="M7 15.500a5.500 5 0 0 1-1.200-9.900A7 6.500 0 0 1 19.500 8.500a5 5 0 0 1-4.500 7z" fill="#0c0c0c" />
      <path d="M12 12c-2 2-6.500 1.500-6.500-1.500s4.500-3.500 6.500-1l2 2c1.500 1 3.800 0 3.800-2s-2.300-4-5.300-2c-1.500 1-3 3-4 3.500M9 6c2-2 5-2 6.500 0" stroke="#cbcbcb" strokeWidth="1.200" />
    </svg>
    <svg width="22" height="22" viewBox="0 0 22 22" aria-hidden="true">
      <circle cx="11" cy="11" r="9.500" fill="#8c8c8c" stroke="#555" strokeDasharray="2 1.500" />
      <circle cx="11" cy="11" r="7.500" fill="#ccc" stroke="#444" />
      <circle cx="11" cy="11" r="5.800" fill="#9a1010" stroke="#4a0505" />
      <circle cx="9.500" cy="8.500" r="2" fill="#e86a6a" />
    </svg>
    <svg width="22" height="18" viewBox="0 0 22 18" fill="none" stroke="#666" aria-hidden="true">
      <circle cx="4" cy="15" r="2" fill="#555" />
      <ellipse cx="8" cy="11" rx="3.500" ry="1.800" transform="rotate(45 8 11)" strokeWidth="1.300" />
      <ellipse cx="13.500" cy="6" rx="6" ry="2.300" transform="rotate(45 13.500 6)" strokeWidth="1.500" />
      <path d="M4 15l10-9" />
    </svg>
    <svg width="28" height="18" viewBox="0 0 28 18" aria-hidden="true">
      <path d="M2.500 2h5v12L5 17l-2.500-3zM11.500 16V4L14 1l3 3v4" fill="none" stroke="#111" strokeWidth="1.200" />
      <path d="M19.500 5l7 12h-13z" fill="#f8b81c" stroke="#c67a10" strokeLinejoin="round" strokeWidth="1.500" />
      <path d="M19.500 8.500v4.500M19.500 14.500v1.500" stroke="#111" strokeWidth="1.800" />
    </svg>
    <svg width="22" height="18" viewBox="0 0 22 18" fill="none" stroke="#111" strokeWidth="2" aria-hidden="true">
      <path d="M1.500 6.500c5.500-5 13.500-5 19 0M4.500 9.500c4-3.500 9-3.500 13 0M7.500 12.500c2-2 5-2 7 0" />
      <path d="M11 16.500l-2-2.500q2-1.500 4 0z" fill="#111" stroke="none" />
    </svg>
    <svg width="22" height="16" viewBox="0 0 22 16" aria-hidden="true">
      <rect x="2" y="2" width="18" height="12" rx="2" fill="#111" />
      <path d="M6 5v6M8.500 5v6M11 5v6M13.500 5v6M16 5v6" stroke="#999" strokeWidth="1.200" />
    </svg>
    <svg width="22" height="18" viewBox="0 0 22 18" fill="none" stroke="#222" strokeWidth="1.300" aria-hidden="true">
      <path d="M4.500 9a7.500 7.500 0 1 1 2.500 5.600M12 4.500V9l3 2.500" />
      <path d="M1 8h7L4.500 12z" fill="#222" stroke="none" />
    </svg>
    <svg width="22" height="16" viewBox="0 0 22 16" fill="none" aria-hidden="true">
      <path d="M1 5h3l5-4v14l-5-4H1z" fill="#111" />
      <path d="M11.500 5q2 3 0 6M14 3.500q3.500 4.500 0 9" stroke="#222" strokeWidth="1.400" />
    </svg>
    <svg width="22" height="16" viewBox="0 0 22 16" fill="none" stroke="#222" aria-hidden="true">
      <rect x="3.500" y="1.500" width="15" height="13" rx="1" />
      <path d="M3.500 4.500h15" />
      <path d="M6 7.500h4M6 9.500h4M6 11.500h4" strokeDasharray="1 1" />
      <path d="M11 7h5v5h-5zM13.500 7v5M11 9.500h5" />
    </svg>
    <Charge>23%</Charge>
    <svg width="24" height="16" viewBox="0 0 24 16" fill="none" stroke="#222" strokeWidth="1.200" aria-hidden="true">
      <path d="M6 2.500H1.500v11H6M15 2.500h4.500v11H15M21 6q2 2 0 4" />
      <path d="M12.500 1l-6 7.500h4L8.500 15l6-8h-4z" fill="#111" stroke="none" />
    </svg>
    <Clock>Mon 1:55 AM</Clock>
    <svg width="22" height="18" viewBox="0 0 22 18" fill="none" stroke="#222" strokeWidth="1.500" aria-hidden="true">
      <circle cx="9" cy="8" r="5" />
      <path d="M12.500 11.500L18 16.500" strokeWidth="2" />
    </svg>
    <svg width="22" height="16" viewBox="0 0 22 16" stroke="#111" strokeWidth="2" aria-hidden="true">
      <path d="M3 3h2M3 8h2M3 13h2M7 3h12M7 8h14M7 13h12" />
    </svg>
  </MacTray>
);

const Engine = styled.div`
  margin-left: 16px;
`;

const Logo = styled.span`
  margin: 0 9px 0 18px;
`;

const Stats = styled.output`
  padding-top: 3px;
`;

const Figure = styled.span`
  font-family: ${FIGURES};
`;

const stats = [
  ["v", "2.79"],
  ["Verts:", "32/864"],
  ["Edges:", "32/1,696"],
  ["Faces:", "1/834"],
  ["Tris:", "1,724"],
  ["Mem:", "14.24M"],
];

const tools = ["Extrude Region", "Extrude Individual", "Inset Faces", "Make Edge/Face", "Subdivide", "Loop Cut and Slide", "Offset Edge Slide", "Duplicate"];
const frames = Array.from({ length: 17 }, (_, i) => -40 + i * 20);
const playback = [
  ["first", "Jump to start"],
  ["prev", "Previous keyframe"],
  ["playBack", "Play backwards"],
  ["play", "Play"],
  ["next", "Next keyframe"],
  ["last", "Jump to end"],
];

export default function App() {
  return (
    <Screen>
      <GlobalStyle />
      <MacBar>
        <FaApple size={15} />
        <MacMenu $bold>Blender</MacMenu>
        <MacMenu>Window</MacMenu>
        <Tray />
      </MacBar>
      <Desk>
        <Column>
          <TitleBar>
            <Lights>
              <Light $color="#fc5753" aria-label="Close">
                <svg width="4" height="4" viewBox="0 0 4 4"><circle cx="2" cy="2" r="2" fill="#4a0404" /></svg>
              </Light>
              <Light $color="#fdbc40" aria-label="Minimise" />
              <Light $color="#28c94c" aria-label="Zoom" />
            </Lights>
            <Title>
              <svg width="12" height="15" viewBox="0 0 12 15" aria-hidden="true">
                <path d="M.500.500h7l4 4v10H.500z" fill="#f6f6f6" stroke="#b5b5b5" />
                <path d="M7.500.500v4h4" fill="none" stroke="#b5b5b5" />
              </svg>
              next queen.blend
            </Title>
            <Spacer />
          </TitleBar>
          <Workspace>
            <Bar $tone="#6a6a6a" $line $top={2}>
              <EditorType icon="info" label="Editor type: Info" />
              <MenuRow>
                {["File", "Render", "Window", "Help"].map((m) => (
                  <MenuItem key={m}>{m}</MenuItem>
                ))}
              </MenuRow>
              <Group $w={192} $cols="30px 1fr 19px 19px">
                <TypeButton aria-label="Screen layout"><Icon name="layout" /><Arrows /></TypeButton>
                <TextField aria-label="Layout name" defaultValue="Default" />
                <Push aria-label="Add layout"><Icon name="plus" /></Push>
                <Push aria-label="Delete layout"><Icon name="cross" /></Push>
              </Group>
              <Group $w={192} $gap={5} $cols="30px 1fr 19px 19px">
                <TypeButton aria-label="Scene"><Icon name="scene" /><Arrows /></TypeButton>
                <TextField aria-label="Scene name" defaultValue="Scene" />
                <Push aria-label="Add scene"><Icon name="plus" /></Push>
                <Push aria-label="Delete scene"><Icon name="cross" /></Push>
              </Group>
              <Engine>
                <Group $w={111}>
                  <Select label="Render engine" value="Blender Render" />
                </Group>
              </Engine>
              <Logo><Icon name="blender" size={17} /></Logo>
              <Stats>
                {stats.map(([name, value]) => (
                  <React.Fragment key={name}>{name}<Figure>{value}</Figure> | </React.Fragment>
                ))}
                Cylinder
              </Stats>
              <CornerGrip at="tr" />
              <CornerGrip at="bl" />
            </Bar>
            <ViewRow>
              <Column>
                <ViewRow>
                  <Shelf>
                    <ShelfTop>
                      <Tabs>
                        <Tab $h={36} $on><span>Tools</span></Tab>
                        <Tab $h={44}><span>Create</span></Tab>
                        <Tab $h={79}><span>Shading / UVs</span></Tab>
                        <Tab $h={49}><span>Options</span></Tab>
                        <Tab $h={79}><span>Grease Pencil</span></Tab>
                      </Tabs>
                      <ToolPanel>
                        <Stack $m="-8px 3px 7px">
                          <Group><Push $text>Push/Pull</Push></Group>
                        </Stack>
                        <HeadBar $open $pad={5}>
                          <Triangle open />
                          <HeadText>Mesh Tools</HeadText>
                          <Grip />
                        </HeadBar>
                        <Stack $m="7px 3px 0">
                          <Label>Deform:</Label>
                          <Group $rows={19}>
                            <Split><Push $text>Slide Edge</Push><Push $text>Vertex</Push></Split>
                            <Push $text>Noise</Push>
                            <Push $text>Smooth Vertex</Push>
                            <Push $text>Randomize</Push>
                          </Group>
                          <Gap $h={5} />
                          <Label>Add:</Label>
                          <Group $rows={19}>
                            <Select label="Extrude" value="Extrude" />
                            {tools.map((t) => <Push $text key={t}>{t}</Push>)}
                            <Split><Push $text>Spin</Push><Push $text>Screw</Push></Split>
                            <Split><Push $text>Knife</Push><Push $text>Select</Push></Split>
                            <Push $text>Knife Project</Push>
                          </Group>
                        </Stack>
                      </ToolPanel>
                      <Track $m="5px 3px 4px 0"><Thumb $before={70} $size={60} /></Track>
                    </ShelfTop>
                    <ShelfBottom>
                      <OpPanel>
                        <OpHead>
                          <Triangle open />
                          <HeadText>Translate</HeadText>
                          <Grip />
                        </OpHead>
                        <Gap $h={8} />
                        <Label>Vector</Label>
                        <Group $rows={19} $round={8}>
                          <Num name="X:" label="X" value="0.000" />
                          <Num name="Y:" label="Y" value="0.000" />
                          <Num name="Z:" label="Z" value="0.028" />
                        </Group>
                        <Gap $h={5} />
                        <Label>Constraint Axis</Label>
                        <CheckRow><CheckBox /><CheckText>X</CheckText></CheckRow>
                        <CheckRow><CheckBox /><CheckText>Y</CheckText></CheckRow>
                        <CheckRow $on><CheckBox checked /><CheckText>Z</CheckText></CheckRow>
                        <Gap $h={6} />
                        <Label>Orientation</Label>
                      </OpPanel>
                      <Track $m="4px 3px 3px 0"><Thumb $size={47} /></Track>
                    </ShelfBottom>
                  </Shelf>
                  <Viewport>
                    <Scene3D />
                    <ViewLabel>Front Ortho</ViewLabel>
                    <ViewLabel $bottom>(1) Cylinder</ViewLabel>
                    <Popup role="menu">
                      <PopupTitle>Merge</PopupTitle>
                      <PopupItem $on role="menuitem"><span><u>A</u>t Center</span><span>Alt M</span></PopupItem>
                      <PopupItem role="menuitem"><span>At <u>C</u>ursor</span><span>Alt M</span></PopupItem>
                      <PopupItem role="menuitem"><span>C<u>o</u>llapse</span><span>Alt M</span></PopupItem>
                    </Popup>
                    <Tip role="tooltip">
                      <TipTitle>Merge selected vertices:</TipTitle>
                      <TipValue>At Center</TipValue>
                      <TipCode>Python: bpy.ops.mesh.merge(type='CENTER')</TipCode>
                    </Tip>
                    <Expand aria-label="Show properties region">
                      <svg width="7" height="7" viewBox="0 0 7 7"><path d="M3.500 0v7M0 3.500h7" stroke="#a5abae" strokeWidth="2" /></svg>
                    </Expand>
                    <CornerGrip at="tr" />
                  </Viewport>
                </ViewRow>
                <Bar $line>
                  <EditorType icon="cube" label="Editor type: 3D View" />
                  <MenuRow>
                    {["View", "Select", "Add", "Mesh"].map((m) => <MenuItem key={m}>{m}</MenuItem>)}
                  </MenuRow>
                  <Group $w={99}><Select label="Mode" value="Edit Mode" icon="editMode" pad={23} /></Group>
                  <EditorType icon="wire" label="Viewport shading" gap={5} />
                  <EditorType icon="pivot" label="Pivot point" gap={5} />
                  <Group $w={152} $gap={5} $cols="19px 19px 19px 19px 1fr">
                    <Push $tone="dark" aria-label="Manipulator"><Icon name="axes" /></Push>
                    <Push $tone="blue" aria-label="Translate"><Icon name="translate" /></Push>
                    <Push $tone="dark" aria-label="Rotate"><Icon name="rotate" /></Push>
                    <Push $tone="dark" aria-label="Scale"><Icon name="scale" /></Push>
                    <Select label="Orientation" value="Global" />
                  </Group>
                  <Group $w={60} $gap={5} $cols="1fr 1fr 1fr">
                    <Push aria-label="Vertex select"><Icon name="vertexMode" /></Push>
                    <Push $tone="dim" aria-label="Edge select"><Icon name="edgeMode" /></Push>
                    <Push $tone="dim" aria-label="Face select"><Icon name="faceMode" /></Push>
                  </Group>
                  <EditorType icon="proportional" label="Proportional editing" gap={5} />
                  <Group $w={73} $gap={5} $cols="19px 1fr 19px">
                    <Push aria-label="Snap"><Icon name="magnet" /></Push>
                    <TypeButton aria-label="Snap element"><Icon name="increment" /><Arrows /></TypeButton>
                    <Push aria-label="Absolute grid snap"><Icon name="snapGrid" /></Push>
                  </Group>
                  <Group $w={20} $gap={5}><Push aria-label="Auto merge"><Icon name="snapPeel" /></Push></Group>
                  <Group $w={40} $gap={5} $cols="1fr 1fr">
                    <Push aria-label="Render image"><Icon name="cameraNew" /></Push>
                    <Push aria-label="Render animation"><Icon name="clapper" /></Push>
                  </Group>
                  <CornerGrip at="bl" />
                </Bar>
                <TimeBody>
                  <FrameLines />
                  <CornerGrip at="tr" />
                </TimeBody>
                <Ruler>
                  <RulerBar>
                    <Ticks>{frames.map((f) => <span key={f}>{f}</span>)}</Ticks>
                  </RulerBar>
                </Ruler>
                <Bar>
                  <EditorType icon="clock" label="Editor type: Timeline" />
                  <MenuRow>
                    {["View", "Marker", "Frame", "Playback"].map((m) => <MenuItem key={m}>{m}</MenuItem>)}
                  </MenuRow>
                  <Group $w={40} $gap={2} $cols="1fr 1fr">
                    <Push aria-label="Use preview range"><Icon name="clockAuto" /></Push>
                    <Push aria-label="Lock time cursor"><Icon name="lock" /></Push>
                  </Group>
                  <Group $w={228} $gap={5} $cols="115px 1fr" $round={9}>
                    <Num name="Start:" label="Start frame" value="1" />
                    <Num name="End:" label="End frame" value="250" />
                  </Group>
                  <Group $w={90} $gap={5} $round={9}>
                    <Num label="Current frame" value="1" />
                  </Group>
                  <Group $w={120} $gap={16} $cols="repeat(6, 1fr)">
                    {playback.map(([icon, label]) => (
                      <Push key={icon} aria-label={label}><Icon name={icon} /></Push>
                    ))}
                  </Group>
                  <Group $w={115} $gap={5}><Select label="Sync mode" value="No Sync" /></Group>
                  <Group $w={20} $gap={16}><Push aria-label="Auto keyframe"><Icon name="record" /></Push></Group>
                  <EditorType icon="diamond" label="Keyframe type" gap={5} />
                  <Group $grow $gap={5} $bleed={8} $cols="1fr 19px">
                    <IconField>
                      <Icon name="keySet" />
                      <TextField aria-label="Active keying set" defaultValue="" />
                    </IconField>
                    <Push aria-label="Insert keyframe"><Icon name="key" /></Push>
                  </Group>
                </Bar>
              </Column>
              <SideColumn>
                <Bar>
                  <EditorType icon="outliner" label="Editor type: Outliner" />
                  <MenuRow>
                    <MenuItem>View</MenuItem>
                    <MenuItem>Search</MenuItem>
                  </MenuRow>
                  <Group $w={80} $gap={2}><Select label="Display mode" value="All" /></Group>
                  <CornerGrip at="tr" />
                </Bar>
                <Tree>
                  <TreeMain>
                    <TreeList>
                      <TreeRow>
                        <TreeName $depth={0} $on><Expander><PlusMinus minus /></Expander><Halo $color="#a9b0b5"><Icon name="scene" /></Halo>Scene</TreeName>
                        <TreeCell /><TreeCell /><TreeCell />
                      </TreeRow>
                      <TreeRow $alt>
                        <TreeName $depth={1}><Expander><PlusMinus /></Expander><Halo><Icon name="layers" /></Halo>Rende</TreeName>
                        <TreeCell /><TreeCell /><TreeCell />
                      </TreeRow>
                      <TreeRow>
                        <TreeName $depth={1}><Expander $hidden /><Halo $color="#8f96a5"><Icon name="world" /></Halo>World</TreeName>
                        <TreeCell /><TreeCell /><TreeCell />
                      </TreeRow>
                      <TreeRow $alt>
                        <TreeName $depth={1} $lit><Expander><PlusMinus /></Expander><Halo $color="#b0722f"><Icon name="mesh" /></Halo>Cylind</TreeName>
                        <TreeCell><Icon name="eye" /></TreeCell><TreeCell><Icon name="cursor" /></TreeCell><TreeCell><Icon name="camera" /></TreeCell>
                      </TreeRow>
                    </TreeList>
                    <Track $m="4px 4px 4px 0"><Thumb $size={94} /></Track>
                  </TreeMain>
                  <Track $flat $m="0 22px 0 4px"><Thumb $flat $size={50} /></Track>
                  <CornerGrip at="bl" />
                </Tree>
                <Bar>
                  <EditorType icon="properties" label="Editor type: Properties" />
                  <Group $w={141} $gap={8} $cols="repeat(7, 19px)">
                    {["camera", "layers", "scene", "world", "cubeOrange", "link", "cube"].map((n, i) => (
                      <Push key={n} $tone={i ? "muted" : "blue"} aria-label={n}><Icon name={n} /></Push>
                    ))}
                  </Group>
                  <CornerGrip at="tr" />
                </Bar>
                <PropsBody>
                  <PropsMain>
                    <Crumb><Icon name="pin" /><Icon name="scene" />Scene</Crumb>
                    <Panel title="Render" open>
                      <Line $gap={5}>
                        <Group $grow $cols="44px 44px minmax(0, 1fr)">
                          <Push $tight><Icon name="cameraNew" />Rend</Push>
                          <Push $tight><Icon name="clapper" />Anim</Push>
                          <Push $tight><Icon name="speaker" />Audio</Push>
                        </Group>
                      </Line>
                      <Line>
                        <NameCell $w={50}>Displa</NameCell>
                        <Group $grow $cols="minmax(0, 1fr) 19px">
                          <Select label="Display" value="Image Ed" />
                          <Push aria-label="Lock interface"><Icon name="unlock" /></Push>
                        </Group>
                      </Line>
                    </Panel>
                    <Panel title="Dimensions" open>
                      <Line $gap={6}>
                        <Group $grow $cols="minmax(0, 1fr) 19px 19px">
                          <Select label="Render presets" value="Render Presets" pad={6} />
                          <Push aria-label="Add preset"><Icon name="plus" /></Push>
                          <Push aria-label="Remove preset"><Icon name="minus" /></Push>
                        </Group>
                      </Line>
                      <Halves>
                        <Stack $m="0">
                          <Label $pad={7}>Resolution:</Label>
                          <Group $rows={19} $round={8}>
                            <Num label="Resolution X" value="1920" align="center" />
                            <Num label="Resolution Y" value="1080" align="center" />
                            <Num label="Resolution percentage" value="50%" align="center" fill />
                          </Group>
                          <Label $pad={7}>Aspect R…</Label>
                          <Group $rows={19} $round={8}>
                            <Num label="Aspect X" value="1.000" align="center" />
                            <Num label="Aspect Y" value="1.000" align="center" />
                          </Group>
                          <Checks><CheckBox label="Border" /><CheckBox label="Crop" faded /></Checks>
                        </Stack>
                        <Stack $m="0">
                          <Label>Frame Ra</Label>
                          <Group $rows={19} $round={8}>
                            <Num name="Star:" label="Start frame" value="1" />
                            <Num name="E:" label="End frame" value="250" />
                            <Num name="Fra:" label="Frame step" value="1" />
                          </Group>
                          <Label>Frame Ra</Label>
                          <Group><Select label="Frame rate" value="24 fps" /></Group>
                          <Label>Time Re…</Label>
                          <Group $cols="1fr 1fr" $round={9}>
                            <Num label="Old" value="" />
                            <Num label="New" value="" />
                          </Group>
                        </Stack>
                      </Halves>
                    </Panel>
                    <Panel title="Anti-Aliasing" open check={<CheckBox label="Anti-Aliasing" checked />}>
                      <Halves>
                        <Group $cols="repeat(4, 1fr)">
                          {["5", "8", "11", "16"].map((n) => (
                            <Push key={n} $figure $tone={n === "8" ? "blue" : "dark"}>{n}</Push>
                          ))}
                        </Group>
                        <Group><Select label="Filter" value="Mitchell-" /></Group>
                      </Halves>
                      <Gap $h={2} />
                      <Halves>
                        <CheckRow><CheckBox /><CheckText>Full Sa</CheckText></CheckRow>
                        <Group $round={9}><Num label="Filter size" value="1.000" align="center" /></Group>
                      </Halves>
                    </Panel>
                    <Panel title="Sampled Motion Bl" check={<CheckBox label="Sampled Motion Blur" />} />
                    <Panel title="Shading" />
                    <Panel title="Performance" />
                    <Panel title="Post Processing" />
                    <Panel title="Metadata" />
                    <Panel title="Output" open />
                  </PropsMain>
                  <Track $m="5px 4px 5px 6px"><Thumb $size={75} /></Track>
                </PropsBody>
              </SideColumn>
            </ViewRow>
          </Workspace>
        </Column>
      </Desk>
    </Screen>
  );
}
